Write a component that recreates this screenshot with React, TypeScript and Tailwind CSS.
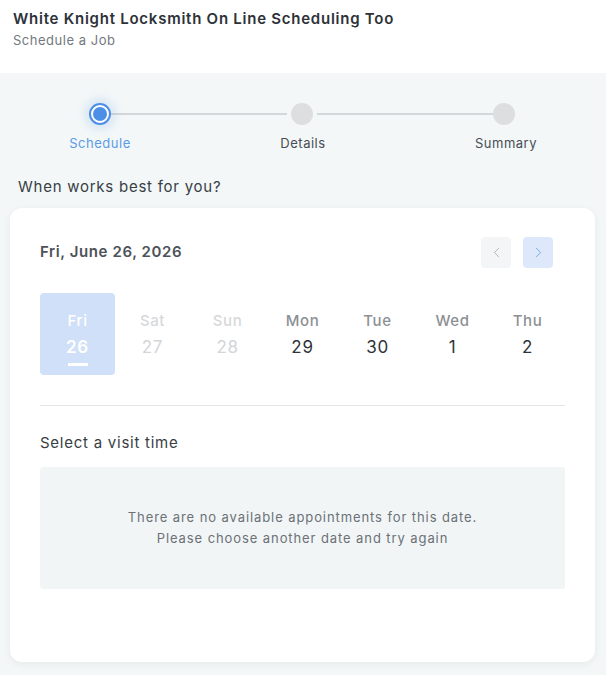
import { ChevronLeft, ChevronRight } from "lucide-react";

const days = [
  { name: "Fri", num: "26", state: "selected" },
  { name: "Sat", num: "27", state: "disabled" },
  { name: "Sun", num: "28", state: "disabled" },
  { name: "Mon", num: "29", state: "open" },
  { name: "Tue", num: "30", state: "open" },
  { name: "Wed", num: "1", state: "open" },
  { name: "Thu", num: "2", state: "open" },
];

function Stepper() {
  return (
    <div className="relative px-[60px] pt-[103px]">
      <div className="relative flex items-center justify-between pl-[29px] pr-[31px]">
        <div className="absolute left-[51px] right-[53px] top-1/2 flex -translate-y-1/2 items-center">
          <div className="h-[2px] flex-1 bg-[#d4d7da]" />
          <div className="w-[30px]" />
          <div className="h-[2px] flex-1 bg-[#d4d7da]" />
        </div>
        <div className="relative flex size-[22px] items-center justify-center rounded-full border-2 border-[#4d8fe6] bg-white shadow-[0_0_10px_4px_rgba(77,143,230,0.18)]">
          <div className="size-[14px] rounded-full bg-[#4d8fe6]" />
        </div>
        <div className="relative size-[22px] rounded-full bg-[#dcdee0]" />
        <div className="relative size-[22px] rounded-full bg-[#dcdee0]" />
      </div>
      <div className="mt-[9px] flex justify-between text-[13px] leading-[18px] tracking-[0.04em]">
        <span className="w-[80px] text-center text-[#5b9be6]">Schedule</span>
        <span className="w-[80px] text-center text-[#474d53]">Details</span>
        <span className="w-[80px] text-center text-[#474d53]">Summary</span>
      </div>
    </div>
  );
}

export default function App() {
  return (
    <div
      className="min-h-[675px] bg-[#f3f7f8] text-[#2f353b]"
      style={{ fontFamily: "Inter, 'Noto Sans', sans-serif" }}
    >
      <header className="h-[73px] bg-white px-[13px] pt-[9px]">
        <h1 className="text-[15px] font-semibold leading-[20px] tracking-[0.05em] text-[#2d3238]">
          White Knight Locksmith On Line Scheduling Too
        </h1>
        <p className="mt-[2px] text-[13px] leading-[18px] tracking-[0.04em] text-[#73787d]">Schedule a Job</p>
      </header>

      <div className="-mt-[73px]">
        <Stepper />
      </div>

      <p className="mt-[25px] px-[18px] text-[15px] leading-[20px] tracking-[0.05em] text-[#383e44]">
        When works best for you?
      </p>

      <section className="ml-[10px] mr-[11px] mt-[11px] h-[454px] rounded-[12px] bg-white px-[30px] pt-[29px] shadow-[0_2px_8px_rgba(0,0,0,0.06)]">
        <div className="flex items-center justify-between">
          <h2 className="text-[15px] font-semibold tracking-[0.04em] text-[#4c5258]">Fri, June 26, 2026</h2>
          <div className="flex gap-[12px] pr-[12px]">
            <button
              type="button"
              className="flex h-[31px] w-[30px] items-center justify-center rounded-[4px] bg-[#f3f5f7] text-[#a8adb2]"
            >
              <ChevronLeft className="size-[17px]" strokeWidth={1.25} />
            </button>
            <button
              type="button"
              className="flex h-[31px] w-[30px] items-center justify-center rounded-[4px] bg-[#dde9fb] text-[#6fa2e6]"
            >
              <ChevronRight className="size-[17px]" strokeWidth={1.25} />
            </button>
          </div>
        </div>

        <div className="mt-[25px] grid grid-cols-7">
          {days.map((d) => (
            <div
              key={d.name}
              className={`flex h-[82px] flex-col items-center pt-[17px] ${
                d.state === "selected" ? "rounded-[4px] bg-[#cfe0f8]" : ""
              }`}
            >
              <span
                className={`text-[15px] font-medium leading-[22px] tracking-[0.04em] ${
                  d.state === "selected"
                    ? "text-white"
                    : d.state === "disabled"
                      ? "text-[#d6d8db]"
                      : "text-[#8c9095]"
                }`}
              >
                {d.name}
              </span>
              <span
                className={`mt-[3px] text-[17px] leading-[24px] tracking-[0.04em] ${
                  d.state === "selected"
                    ? "font-semibold text-white"
                    : d.state === "disabled"
                      ? "text-[#d3d5d8]"
                      : "text-[#2e3338]"
                }`}
              >
                {d.num}
              </span>
              {d.state === "selected" ? <span className="mt-[4px] h-[3px] w-[20px] bg-white" /> : null}
            </div>
          ))}
        </div>

        <div className="mt-[30px] h-px bg-[#e3e5e7]" />

        <p className="mt-[27px] text-[15px] leading-[20px] tracking-[0.05em] text-[#383e44]">Select a visit time</p>

        <div className="mt-[14px] flex h-[122px] flex-col items-center justify-center rounded-[3px] bg-[#f1f5f6] text-center text-[13px] leading-[21px] tracking-[0.07em] text-[#6b7177]">
          <p>There are no available appointments for this date.</p>
          <p>Please choose another date and try again</p>
        </div>
      </section>
    </div>
  );
}
